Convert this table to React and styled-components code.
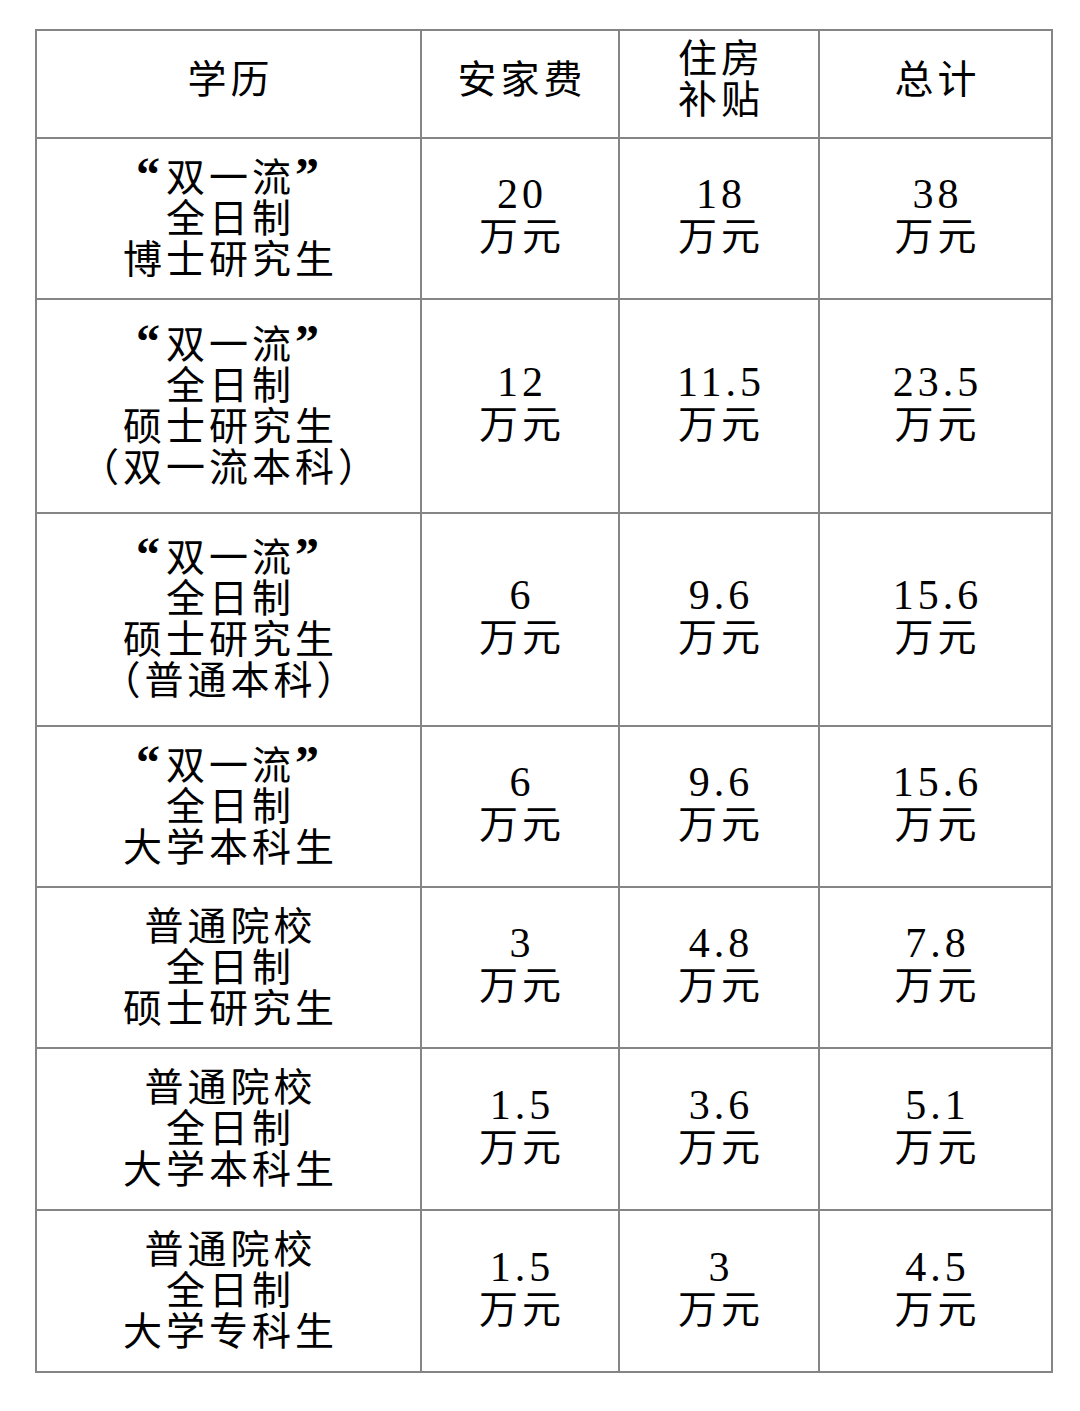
import React from "react";
import styled, { createGlobalStyle } from "styled-components";

const GlobalStyle = createGlobalStyle`
  html, body {
    margin: 0;
    padding: 0;
    background: #ffffff;
  }
  body {
    font-family: "Noto Sans CJK SC", sans-serif;
    color: #000;
  }
`;

// 数据：学历 / 安家费 / 住房补贴 / 总计
const rows = [
  { edu: ["“双一流”", "全日制", "博士研究生"], fee: "20", house: "18", total: "38", h: 161 },
  { edu: ["“双一流”", "全日制", "硕士研究生", "（双一流本科）"], fee: "12", house: "11.5", total: "23.5", h: 214 },
  { edu: ["“双一流”", "全日制", "硕士研究生", "（普通本科）"], fee: "6", house: "9.6", total: "15.6", h: 213 },
  { edu: ["“双一流”", "全日制", "大学本科生"], fee: "6", house: "9.6", total: "15.6", h: 161 },
  { edu: ["普通院校", "全日制", "硕士研究生"], fee: "3", house: "4.8", total: "7.8", h: 161 },
  { edu: ["普通院校", "全日制", "大学本科生"], fee: "1.5", house: "3.6", total: "5.1", h: 162 },
  { edu: ["普通院校", "全日制", "大学专科生"], fee: "1.5", house: "3", total: "4.5", h: 162 },
];

export default function App() {
  // 引号用粗一点的衬线字形
  const quoted = (line) =>
    line.startsWith("“") ? (
      <>
        <Quote>“</Quote>
        {line.slice(1, -1)}
        <Quote>”</Quote>
      </>
    ) : (
      line
    );

  return (
    <Page>
      <GlobalStyle />
      <Table>
        <colgroup>
          <col style={{ width: 385 }} />
          <col style={{ width: 198 }} />
          <col style={{ width: 200 }} />
          <col style={{ width: 233 }} />
        </colgroup>
        <thead>
          <Row $h={108}>
            <Cell as="th" $head>
              <Line>学历</Line>
            </Cell>
            <Cell as="th" $head>
              <Line>安家费</Line>
            </Cell>
            <Cell as="th" $head>
              <Line>住房</Line>
              <Line>补贴</Line>
            </Cell>
            <Cell as="th" $head>
              <Line>总计</Line>
            </Cell>
          </Row>
        </thead>
        <tbody>
          {rows.map((r, i) => (
            <Row key={i} $h={r.h}>
              <Cell>
                {r.edu.map((l, j) => (
                  <Line key={j}>{quoted(l)}</Line>
                ))}
              </Cell>
              {[r.fee, r.house, r.total].map((v, j) => (
                <Cell key={j}>
                  <Num>{v}</Num>
                  <Line>万元</Line>
                </Cell>
              ))}
            </Row>
          ))}
        </tbody>
      </Table>
    </Page>
  );
}

const Page = styled.div`
  padding: 29px 0 40px 35px;
`;

const Table = styled.table`
  border-collapse: collapse;
  table-layout: fixed;
  width: 1016px;
`;

const Row = styled.tr`
  height: ${({ $h }) => $h}px;
`;

const Cell = styled.td`
  border: 2px solid #858585;
  padding: 0 0 ${({ $head }) => ($head ? 16 : 7)}px 0;
  text-align: center;
  vertical-align: middle;
  font-weight: 400;
`;

const Line = styled.div`
  font-family: "Noto Sans CJK SC", sans-serif;
  font-size: 39px;
  line-height: 41px;
  letter-spacing: 4px;
  padding-left: 4px;
  white-space: nowrap;
  color: #000;
`;

const Num = styled.div`
  font-family: "Liberation Serif", "Noto Sans CJK SC", serif;
  font-size: 42px;
  line-height: 37px;
  letter-spacing: 4px;
  padding-left: 4px;
  color: #000;
`;

const Quote = styled.span`
  font-family: "Liberation Serif", serif;
  font-weight: 700;
  font-size: 48px;
  line-height: 0;
  letter-spacing: 6px;
`;
